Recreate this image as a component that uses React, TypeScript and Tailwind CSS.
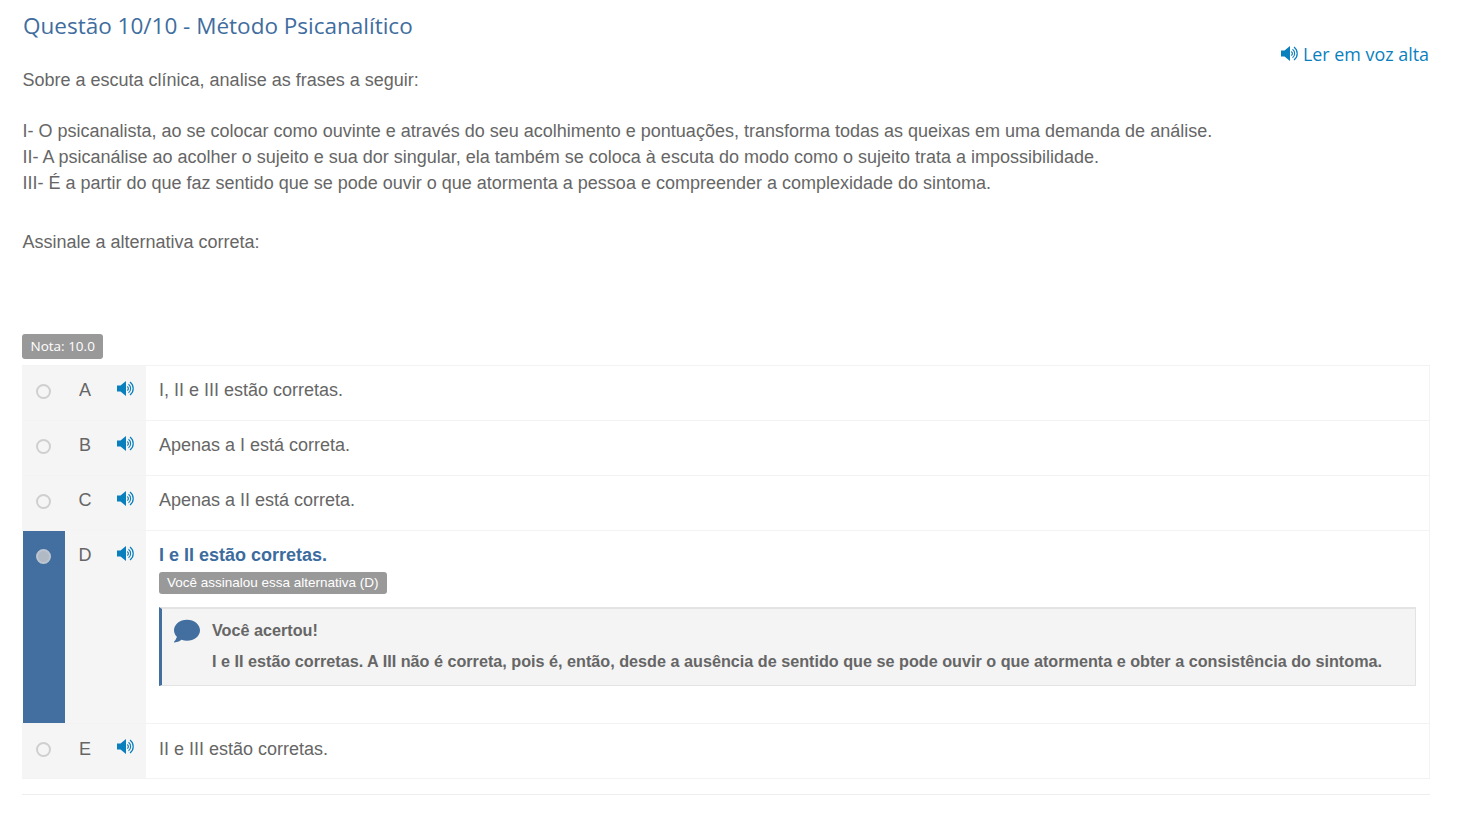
import { FaComment } from "react-icons/fa";

const sans = "font-['Liberation_Sans',Arial,sans-serif]";

function Speaker({ className }: { className?: string }) {
  return (
    <svg viewBox="0 0 17 15" className={className} fill="none" stroke="currentColor">
      <path d="M0 4.5h3.5L9 0v15l-5.5-4.5H0z" fill="currentColor" stroke="none" />
      <path d="M10.3 5.4a2.6 2.6 0 0 1 0 4.2" strokeWidth="1.2" />
      <path d="M11.5 3.2a5.4 5.4 0 0 1 0 8.6" strokeWidth="1.1" />
      <path d="M13 1a8.2 8.2 0 0 1 0 13" strokeWidth="1.2" />
    </svg>
  );
}

function Option({ letter, text, selected, last, children }: { letter: string; text?: string; selected?: boolean; last?: boolean; children?: React.ReactNode }) {
  return (
    <div className={"flex border-b border-[#f3f3f3] " + (selected ? "h-[193px]" : "h-[55px]")}>
      <div className={"flex justify-center pt-[18px] " + (selected ? "bg-[#426f9f] ml-px w-[42px] pr-px" : "bg-[#f5f5f5] w-[43px]")}>
        <span className={"w-[15px] h-[15px] rounded-full border-2 " + (selected ? "bg-[#b1b9c4] border-[#bcc5d0]" : "border-[#cfcfcf] bg-[#f5f5f5]")} />
      </div>
      <div className={"w-[81px] bg-[#f5f5f5] flex text-[18px] leading-[20px] text-[#666666] " + (last ? "pt-[15px]" : "pt-[14px]")}>
        <span className="w-[40px] text-center">{letter}</span>
        <Speaker className={"text-[#0a7fbe] w-[17px] h-[15px] ml-[12px] " + (last ? "mt-0" : "mt-px")} />
      </div>
      <div className={"flex-1 pl-[13px] pr-[13px] text-[18px] leading-[20px] text-[#666666] " + (last ? "pt-[15px]" : "pt-[14px]")}>
        {selected ? <strong className="text-[#3c6c9e]">{text}</strong> : text}
        {children}
      </div>
    </div>
  );
}

export default function App() {
  return (
    <div className={"bg-white min-h-[817px] pl-[22px] pr-[43px] pt-[9px] " + sans}>
      <h3 className="font-['Open_Sans',sans-serif] text-[22.5px] leading-[33px] text-[#3f6d9e] pl-px">Questão 10/10 - Método Psicanalítico</h3>
      <div className="flex justify-end items-center gap-[5px] h-[26px] mt-[-1px] pr-px text-[#0a7fbe] font-['Open_Sans',sans-serif] text-[17.9px]">
        <Speaker className="w-[17px] h-[15px] mb-[2px]" />
        <span>Ler em voz alta</span>
      </div>
      <div className="pl-[0.5px] text-[18px] leading-[26px] text-[#666666]">
        <p>Sobre a escuta clínica, analise as frases a seguir:</p>
        <p className="mt-[25px]">I- O psicanalista, ao se colocar como ouvinte e através do seu acolhimento e pontuações, transforma todas as queixas em uma demanda de análise.</p>
        <p>II- A psicanálise ao acolher o sujeito e sua dor singular, ela também se coloca à escuta do modo como o sujeito trata a impossibilidade.</p>
        <p>III- É a partir do que faz sentido que se pode ouvir o que atormenta a pessoa e compreender a complexidade do sintoma.</p>
        <p className="mt-[33px]">Assinale a alternativa correta:</p>
      </div>
      <span className="inline-block mt-[79px] h-[25px] px-[8.5px] rounded-[3px] bg-[#999999] text-white font-['Open_Sans',sans-serif] text-[13.5px] leading-[25px] align-top">Nota: 10.0</span>
      <div className="mt-[6px] border border-[#f3f3f3] border-l-0 border-b-0">
        <Option letter="A" text="I, II e III estão corretas." />
        <Option letter="B" text="Apenas a I está correta." />
        <Option letter="C" text="Apenas a II está correta." />
        <Option letter="D" text="I e II estão corretas." selected>
          <div className="mt-[7px]">
            <span className="inline-block h-[22px] px-[8px] rounded-[3px] bg-[#999999] text-white text-[13.5px] leading-[22px] align-top">Você assinalou essa alternativa (D)</span>
          </div>
          <div className="mt-[13px] h-[79px] bg-[#f4f4f4] border border-[#e3e3e3] border-t-2 border-l-[3px] border-l-[#426f9f] flex text-[16.2px] font-bold">
            <FaComment className="text-[#426f9f] text-[26px] ml-[12px] mt-[9px]" />
            <div className="ml-[12px] pt-[11px] leading-[20px]">
              <p>Você acertou!</p>
              <p className="mt-[11px]">I e II estão corretas. A III não é correta, pois é, então, desde a ausência de sentido que se pode ouvir o que atormenta e obter a consistência do sintoma.</p>
            </div>
          </div>
        </Option>
        <Option letter="E" text="II e III estão corretas." last />
      </div>
      <hr className="mt-[15px] border-[#eeeeee]" />
    </div>
  );
}
